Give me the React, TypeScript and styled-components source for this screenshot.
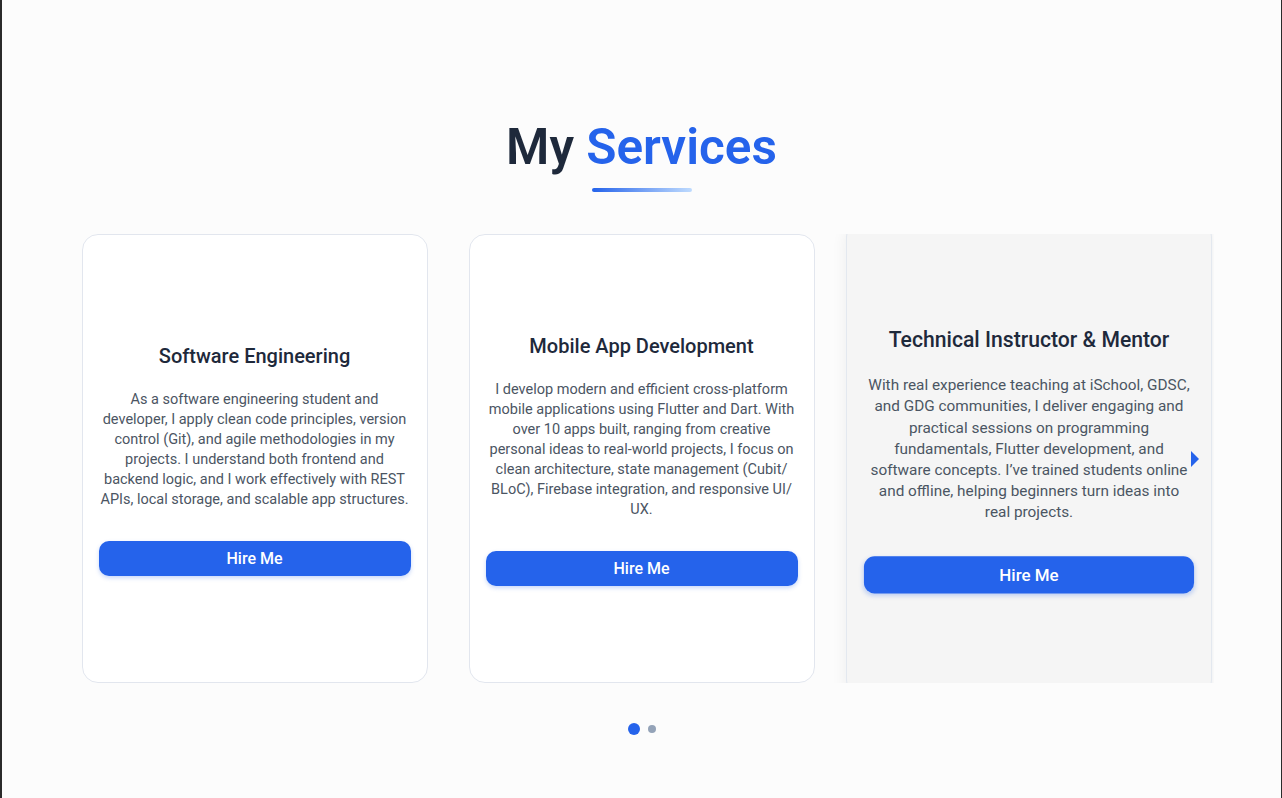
import React from "react";
import styled, { createGlobalStyle } from "styled-components";

const GlobalStyle = createGlobalStyle`
  html, body { margin: 0; padding: 0; background: #fcfcfc; }
  * { box-sizing: border-box; }
`;

const Frame = styled.div`
  min-height: 798px;
  border-left: 2px solid #2b2b2b;
  border-right: 1px solid #2b2b2b;
  background: #fcfcfc;
  font-family: Roboto, "Liberation Sans", sans-serif;
`;

const Section = styled.section`
  display: flex;
  flex-direction: column;
  align-items: center;
  padding-top: 117px;
`;

const Heading = styled.h2`
  margin: 0;
  font-family: Roboto, "Liberation Sans", sans-serif;
  font-size: 49.5px;
  line-height: 60px;
  font-weight: 600;
  color: #1e293b;
`;

const Accent = styled.span`
  color: #2563eb;
`;

const Underline = styled.div`
  width: 100px;
  height: 4px;
  margin-top: 11px;
  border-radius: 2px;
  background: linear-gradient(90deg, #2563eb 0%, #bfdbfe 100%);
`;

const Viewport = styled.div`
  position: relative;
  margin-top: 42px;
  width: 1120px;
  height: 449px;
  clip-path: inset(0px -12px 0px -12px);
`;

const Track = styled.div`
  display: grid;
  grid-template-columns: repeat(3, 346px);
  gap: 41px;
  height: 100%;
`;

const Card = styled.div<{ $active?: boolean }>`
  height: 100%;
  display: flex;
  flex-direction: column;
  align-items: center;
  justify-content: center;
  padding: 0 16px;
  text-align: center;
  border: 1px solid ${(p) => (p.$active ? "#e3e8ef" : "#e2e6ee")};
  border-radius: 16px;
  background: ${(p) => (p.$active ? "#f5f5f5" : "#ffffff")};
  transform: ${(p) => (p.$active ? "scale(1.058)" : "none")};
  box-shadow: ${(p) => (p.$active ? "0 4px 14px rgba(15, 23, 42, 0.06)" : "none")};
`;

const CardTitle = styled.h3`
  margin: 0 0 20px;
  font-size: 20px;
  line-height: 28px;
  font-weight: 500;
  color: #1e293b;
`;

const CardText = styled.p`
  margin: 0;
  padding: 0 1px;
  font-size: 14.5px;
  line-height: 20px;
  color: #4b5563;
`;

const HireButton = styled.button`
  margin-top: 31px;
  width: 100%;
  height: 35px;
  border: none;
  border-radius: 10px;
  background: #2563eb;
  color: #ffffff;
  font-family: Roboto, "Liberation Sans", sans-serif;
  font-size: 16px;
  font-weight: 500;
  box-shadow: 0 2px 4px rgba(37, 99, 235, 0.25);
  cursor: pointer;
`;

const NextArrow = styled.div`
  position: absolute;
  right: 3px;
  top: 50%;
  transform: translateY(-50%);
  width: 0;
  height: 0;
  border-top: 8px solid transparent;
  border-bottom: 8px solid transparent;
  border-left: 8px solid #2563eb;
`;

const Dots = styled.div`
  display: flex;
  align-items: center;
  gap: 8px;
  margin-top: 40px;
`;

const Dot = styled.span<{ $active?: boolean }>`
  display: block;
  width: ${(p) => (p.$active ? "12px" : "8px")};
  height: ${(p) => (p.$active ? "12px" : "8px")};
  border-radius: 50%;
  background: ${(p) => (p.$active ? "#2563eb" : "#94a3b8")};
`;

const services = [
  {
    title: "Software Engineering",
    text: "As a software engineering student and developer, I apply clean code principles, version control (Git), and agile methodologies in my projects. I understand both frontend and backend logic, and I work effectively with REST APIs, local storage, and scalable app structures.",
  },
  {
    title: "Mobile App Development",
    text: "I develop modern and efficient cross-platform mobile applications using Flutter and Dart. With over 10 apps built, ranging from creative personal ideas to real-world projects, I focus on clean architecture, state management (Cubit/ BLoC), Firebase integration, and responsive UI/ UX.",
  },
  {
    title: "Technical Instructor & Mentor",
    text: "With real experience teaching at iSchool, GDSC, and GDG communities, I deliver engaging and practical sessions on programming fundamentals, Flutter development, and software concepts. I’ve trained students online and offline, helping beginners turn ideas into real projects.",
    active: true,
  },
];

export default function App() {
  return (
    <>
      <GlobalStyle />
      <Frame>
        <Section>
          <Heading>
            My <Accent>Services</Accent>
          </Heading>
          <Underline />
          <Viewport>
            <Track>
              {services.map((s) => (
                <Card key={s.title} $active={s.active}>
                  <CardTitle>{s.title}</CardTitle>
                  <CardText>{s.text}</CardText>
                  <HireButton>Hire Me</HireButton>
                </Card>
              ))}
            </Track>
            <NextArrow />
          </Viewport>
          <Dots>
            <Dot $active />
            <Dot />
          </Dots>
        </Section>
      </Frame>
    </>
  );
}
